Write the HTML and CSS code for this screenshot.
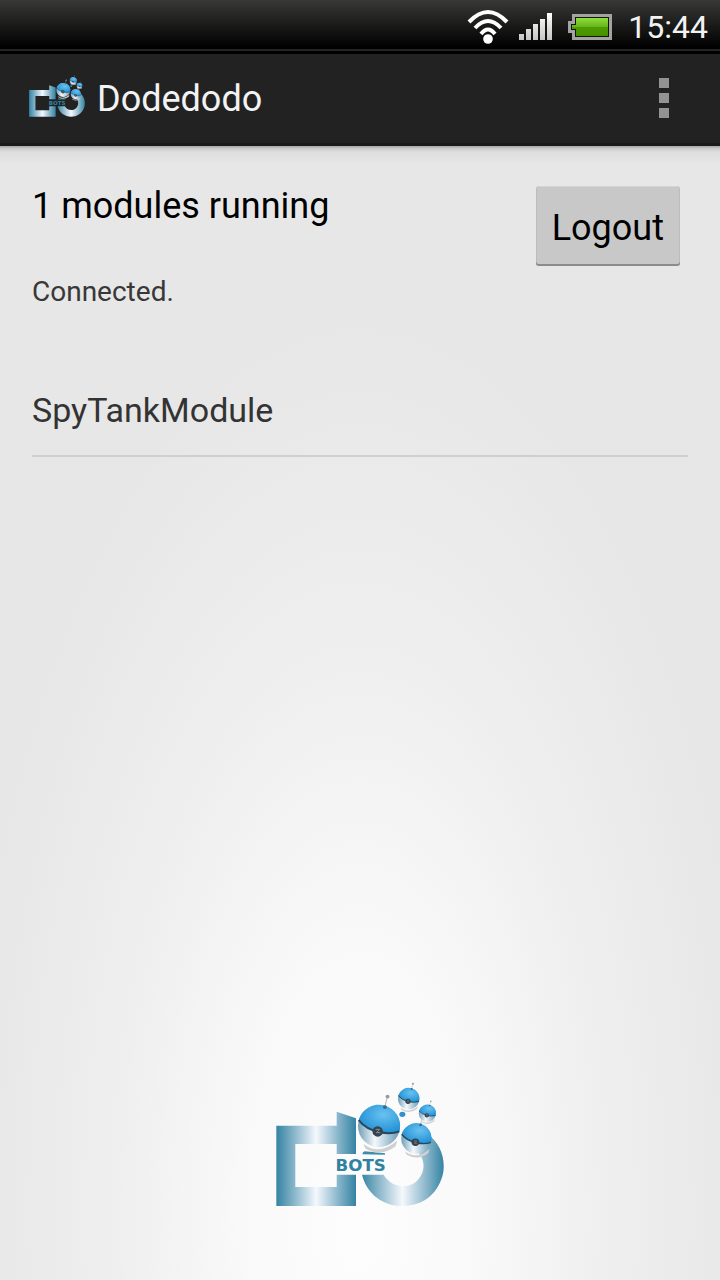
FILE: index.html
```html
<!DOCTYPE html>
<html lang="en">
<head>
<meta charset="utf-8">
<meta name="viewport" content="width=device-width, initial-scale=1">
<title>Dodedodo</title>
<link rel="stylesheet" href="styles.css">
</head>
<body>
<svg class="defs" width="0" height="0" aria-hidden="true">
  <defs>
    <linearGradient id="steel-d" gradientUnits="userSpaceOnUse" x1="49" y1="0" x2="288" y2="0">
      <stop offset="0" stop-color="#3483a3"/><stop offset=".2" stop-color="#7fb0c6"/><stop offset=".5" stop-color="#f5f8fd"/><stop offset=".8" stop-color="#7fb0c6"/><stop offset="1" stop-color="#3483a3"/>
    </linearGradient>
    <linearGradient id="steel-o" gradientUnits="userSpaceOnUse" x1="304" y1="0" x2="551" y2="0">
      <stop offset="0" stop-color="#3483a3"/><stop offset=".2" stop-color="#86b4c9"/><stop offset=".5" stop-color="#f5f8fd"/><stop offset=".8" stop-color="#86b4c9"/><stop offset="1" stop-color="#3483a3"/>
    </linearGradient>
    <radialGradient id="dome" cx=".6" cy=".35" r=".65">
      <stop offset="0" stop-color="#69c2f0"/><stop offset="1" stop-color="#2191d5"/>
    </radialGradient>
    <linearGradient id="belly" x1="0" y1="0" x2="1" y2="0">
      <stop offset="0" stop-color="#6f9fb8"/><stop offset=".4" stop-color="#f4f8fc"/><stop offset=".65" stop-color="#b9d1df"/><stop offset="1" stop-color="#6598b4"/>
    </linearGradient>
    <symbol id="bot" viewBox="-36 -52 72 96">
      <path d="M9-30 13-46" stroke="#b5b5b5" stroke-width="1.5"/>
      <circle cx="13" cy="-45" r="3" fill="#999"/>
      <path d="M-24 27Q0 46 28 22L25 31Q2 48-21 34Z" fill="#d0d0d0"/>
      <circle r="32" fill="url(#belly)"/>
      <path d="M-31-9A32 32 0 1 1 31 8Q18 13 0 9Q-20 5-31-9Z" fill="url(#dome)"/>
      <path d="M-31-9Q-20 5 0 9Q18 13 31 8" fill="none" stroke="#29465a" stroke-width="3"/>
      <circle cx="-2" cy="8" r="8" fill="#35424b"/>
      <path d="M-5 5H1L-4 10H2" fill="none" stroke="#7794a4" stroke-width="1.5"/>
      <circle cx="9" cy="-29" r="3" fill="#376a88"/>
    </symbol>
    <symbol id="logo" viewBox="48 36 504 376">
      <path fill="url(#steel-d)" fill-rule="evenodd" d="M49 169H230V127L288 147V254H230V224H106V353H230V316H288V410H49Z"/>
      <path fill="url(#steel-o)" d="M306 316H371C395 356 448 363 476 329C500 300 493 261 466 242L502 195C548 224 561 286 544 330C523 387 477 410 427 410C370 410 321 375 306 316Z"/>
      <path fill="#3c8eac" d="M307 255Q308 247 314 246L375 252V256Z"/>
      <text class="logo-word" x="302" y="305" text-anchor="middle">BOTS</text>
      <use href="#bot" x="286" y="68" width="142" height="189"/>
      <use href="#bot" x="418" y="134" width="102" height="136"/>
      <use href="#bot" x="410" y="36" width="72" height="96"/>
      <use href="#bot" x="473" y="90" width="58" height="77"/>
      <ellipse cx="427" cy="135" rx="9" ry="8" fill="#318fcb"/>
    </symbol>
  </defs>
</svg>

<div class="status-bar">
  <svg class="wifi" viewBox="0 0 42 34" role="img" aria-label="Wi-Fi">
    <g fill="none" stroke="#fff" stroke-width="4">
      <path d="M2 12Q21-8 40 12"/><path d="M8 18Q21 4 34 18"/><path d="M14 24Q21 15 28 24"/>
    </g>
    <circle cx="21" cy="29" r="4.8" fill="#fff"/>
  </svg>
  <svg class="signal" viewBox="0 0 33 27" role="img" aria-label="Signal">
    <defs><linearGradient id="bars" x1="0" y1="0" x2="0" y2="1"><stop stop-color="#fff"/><stop offset="1" stop-color="#c4c4c4"/></linearGradient></defs>
    <path fill="url(#bars)" d="M0 21h5v6H0zM7 16h5v11H7zM14 11h5v16h-5zM21 6h5v21h-5zM28 0h5v27h-5z"/>
  </svg>
  <svg class="battery" viewBox="0 0 44 26" role="img" aria-label="Battery">
    <defs><linearGradient id="charge" x1="0" y1="0" x2="0" y2="1"><stop stop-color="#90df3a"/><stop offset=".49" stop-color="#65b51c"/><stop offset=".5" stop-color="#4e9d00"/><stop offset="1" stop-color="#449000"/></linearGradient></defs>
    <path fill="#a3a3a3" d="M4 0H44V26H4V19H0V7H4Z"/>
    <path fill="#101800" d="M7 3H41V23H7V16H3V10H7Z"/>
    <path fill="url(#charge)" d="M8 4H40V22H8V15H4V11H8Z"/>
  </svg>
  <time class="clock">15:44</time>
</div>

<header class="app-bar">
  <svg class="app-icon" aria-hidden="true"><use href="#logo"/></svg>
  <h1 class="app-title">Dodedodo</h1>
  <button class="overflow" type="button" aria-label="More options"><span class="dot"></span><span class="dot"></span><span class="dot"></span></button>
</header>

<main class="content">
  <section class="summary">
    <div class="summary-text">
      <h2 class="headline">1 modules running</h2>
      <p class="state">Connected.</p>
    </div>
    <button class="logout" type="button">Logout</button>
  </section>
  <ul class="modules">
    <li class="module">SpyTankModule</li>
  </ul>
  <svg class="brand" role="img" aria-label="DO Bots"><use href="#logo"/></svg>
</main>
</body>
</html>
```
FILE: styles.css
```css
* {
  box-sizing: border-box;
}

body {
  margin: 0;
  min-height: 100vh;
  display: flex;
  flex-direction: column;
  font-family: Roboto, "Noto Sans", sans-serif;
  background: #e7e7e7;
}

h1, h2, p, ul {
  margin: 0;
  padding: 0;
  font-weight: 400;
}

button {
  font-family: inherit;
  border: 0;
  padding: 0;
}

.defs {
  position: absolute;
}

.status-bar {
  display: flex;
  align-items: center;
  justify-content: flex-end;
  height: 54px;
  padding: 0 12px 0 0;
  background: linear-gradient(#383836 0, #000 48px, #000 49px, #242424 49px, #242424 51px, #000 51px);
}

.wifi {
  width: 42px;
  height: 34px;
  margin-right: 10px;
}

.signal {
  width: 33px;
  height: 27px;
  margin-right: 16px;
}

.battery {
  width: 44px;
  height: 26px;
  margin-right: 16px;
}

.status-bar > * {
  margin-bottom: 1px;
}

.clock {
  font-size: 32px;
  line-height: 48px;
  color: #f2f2f2;
}

.app-bar {
  display: flex;
  align-items: center;
  height: 92px;
  padding: 0 40px 0 29px;
  background: #222;
  border-bottom: 3px solid #1a1a1a;
}

.app-icon {
  width: 56px;
  height: 42px;
  margin-bottom: 6px;
}

.app-title {
  margin-left: 12px;
  font-size: 36px;
  line-height: 44px;
  color: #f3f3f3;
}

.overflow {
  display: flex;
  flex-direction: column;
  align-items: center;
  gap: 5px;
  width: 32px;
  margin-left: auto;
  margin-bottom: 2px;
  background: none;
}

.dot {
  width: 10px;
  height: 10px;
  background: #939393;
}

.content {
  flex: 1;
  display: flex;
  flex-direction: column;
  padding: 40px 32px 73px;
  background:
    linear-gradient(#a8a8a8 0, #cfcfcf 3px, #dedede 6px, rgba(231, 231, 231, 0) 18px),
    radial-gradient(ellipse 54% 78% at 50% 94%, #fdfdfd, #f9f9f9 30%, #efefef 62%, #e7e7e7);
}

.summary {
  display: flex;
  align-items: flex-start;
  justify-content: space-between;
  padding-right: 8px;
}

.headline {
  font-size: 36px;
  line-height: 40px;
  color: #000;
}

.state {
  margin-top: 48px;
  font-size: 28px;
  line-height: 36px;
  color: #383838;
}

.logout {
  padding: 4px 16px 0;
  font-size: 36px;
  line-height: 76px;
  color: #000;
  background: #c8c8c8;
  border-radius: 3px;
  box-shadow: inset 0 1px #d4d4d4, inset 0 -2px #8c8c8c, inset 0 0 0 1px #bcbcbc;
}

.modules {
  margin-top: 52px;
  list-style: none;
}

.module {
  padding: 24px 0 21px;
  font-size: 34px;
  line-height: 48px;
  color: #333;
  border-bottom: 2px solid #cfcfcf;
}

.brand {
  width: 168px;
  height: 126px;
  margin: auto auto 0;
}

.logo-word {
  font-family: "DejaVu Sans", sans-serif;
  font-size: 50px;
  font-weight: 700;
  fill: #2f82a0;
}
```
